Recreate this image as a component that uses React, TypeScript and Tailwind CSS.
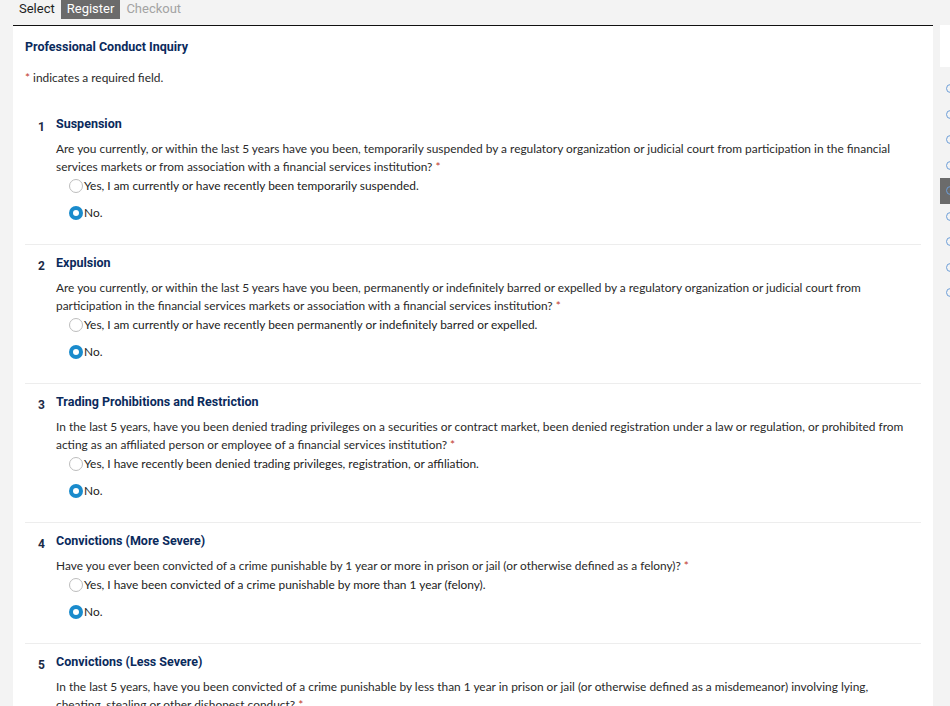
import React from "react";

type Question = {
  n: number;
  title: string;
  text: string;
  yes?: string;
};

const questions: Question[] = [
  {
    n: 1,
    title: "Suspension",
    text: "Are you currently, or within the last 5 years have you been, temporarily suspended by a regulatory organization or judicial court from participation in the financial services markets or from association with a financial services institution?",
    yes: "Yes, I am currently or have recently been temporarily suspended.",
  },
  {
    n: 2,
    title: "Expulsion",
    text: "Are you currently, or within the last 5 years have you been, permanently or indefinitely barred or expelled by a regulatory organization or judicial court from participation in the financial services markets or association with a financial services institution?",
    yes: "Yes, I am currently or have recently been permanently or indefinitely barred or expelled.",
  },
  {
    n: 3,
    title: "Trading Prohibitions and Restriction",
    text: "In the last 5 years, have you been denied trading privileges on a securities or contract market, been denied registration under a law or regulation, or prohibited from acting as an affiliated person or employee of a financial services institution?",
    yes: "Yes, I have recently been denied trading privileges, registration, or affiliation.",
  },
  {
    n: 4,
    title: "Convictions (More Severe)",
    text: "Have you ever been convicted of a crime punishable by 1 year or more in prison or jail (or otherwise defined as a felony)?",
    yes: "Yes, I have been convicted of a crime punishable by more than 1 year (felony).",
  },
  {
    n: 5,
    title: "Convictions (Less Severe)",
    text: "In the last 5 years, have you been convicted of a crime punishable by less than 1 year in prison or jail (or otherwise defined as a misdemeanor) involving lying, cheating, stealing or other dishonest conduct?",
    yes: "Yes, I have been convicted of a misdemeanor involving dishonest conduct.",
  },
];

const heading = "font-['Roboto',sans-serif] font-bold text-[12.5px] text-[#0a2a5c]";

function Radio({ checked }: { checked?: boolean }) {
  return checked ? (
    <span className="w-[14px] h-[14px] rounded-full bg-[#1a8bcc] flex items-center justify-center shrink-0">
      <span className="w-[6px] h-[6px] rounded-full bg-white" />
    </span>
  ) : (
    <span className="w-[14px] h-[14px] rounded-full border border-[#bdbdbd] bg-white shrink-0" />
  );
}

function QuestionBlock({ q, first }: { q: Question; first: boolean }) {
  return (
    <section
      className={`flex pt-[11px] pb-[22px] ${first ? "" : "border-t border-[#ededed]"}`}
    >
      <div className="w-[31px] pl-[13px] pt-[3px] font-['Roboto',sans-serif] font-bold text-[12px] leading-[14px] text-[#1b2a45]">
        {q.n}
      </div>
      <div className="flex-1 pr-[12px]">
        <h3 className={`${heading} leading-[14px]`}>{q.title}</h3>
        <p className="mt-[9px] text-[11.9px] leading-[18px] text-[#2a2a2a]">
          {q.text}
          <span className="text-[#c0392b]"> *</span>
        </p>
        <label className="flex items-center gap-[1px] h-[18px] mt-[1px] pl-[13px] text-[11.9px] text-[#222]">
          <Radio />
          <span>{q.yes}</span>
        </label>
        <label className="flex items-center gap-[1px] h-[18px] mt-[9px] pl-[13px] text-[11.9px] text-[#222]">
          <Radio checked />
          <span>No.</span>
        </label>
      </div>
    </section>
  );
}

export default function App() {
  return (
    <div className="w-[950px] h-[706px] overflow-hidden bg-[#f3f3f3] font-['Lato',sans-serif] flex">
      <main className="ml-[13px] w-[920px] shrink-0">
        <nav className="flex h-[25px] font-['Roboto',sans-serif] text-[13px]">
          <span className="px-[6px] h-[19px] leading-[17px] text-[#1e1e1e]">Select</span>
          <span className="px-[6px] h-[19px] leading-[17px] bg-[#6b6b6b] text-white">Register</span>
          <span className="px-[6px] h-[19px] leading-[17px] text-[#a3a3a3]">Checkout</span>
        </nav>
        <div className="bg-white border-t-[1.5px] border-[#111] pt-[13px] pl-[12px] pr-[12px] h-[700px]">
          <h2 className={`${heading} leading-[16px]`}>Professional Conduct Inquiry</h2>
          <p className="mt-[15px] text-[11.9px] leading-[16px] text-[#2a2a2a]">
            <span className="text-[#c0392b]">*</span> indicates a required field.
          </p>
          <div className="mt-[20px]">
            {questions.map((q, i) => (
              <QuestionBlock key={q.n} q={q} first={i === 0} />
            ))}
          </div>
        </div>
      </main>
      <aside className="ml-[7px] w-[200px] shrink-0 pt-[25px]">
        <div className="h-[42px] bg-white" />
        <ul className="mt-[9px] flex flex-col">
          {Array.from({ length: 9 }).map((_, i) => (
            <li
              key={i}
              className={`h-[25.5px] flex items-center pl-[6px] ${i === 4 ? "bg-[#6b6b6b]" : ""}`}
            >
              <span className="w-[9px] h-[9px] rounded-full border border-[#6d9ed8]" />
            </li>
          ))}
        </ul>
      </aside>
    </div>
  );
}
